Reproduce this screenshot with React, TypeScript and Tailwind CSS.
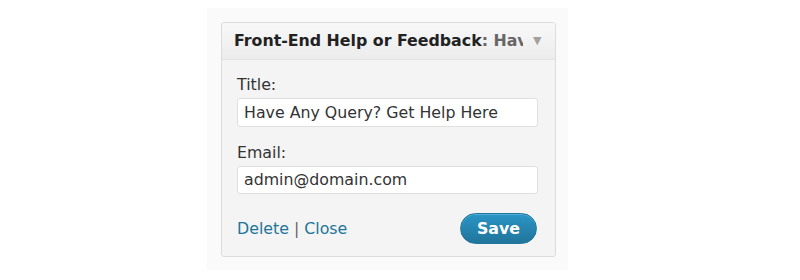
import React from "react";

export default function App() {
  const font = { fontFamily: '"DejaVu Sans", Verdana, sans-serif' };
  return (
    <div className="w-[800px] h-[280px] bg-white flex" style={font}>
      <div className="ml-[207px] mt-[8px] w-[361px] h-[262px] bg-[#fafafa] pt-[14px] pl-[14px]">
        <div className="w-[335px] h-[235px] border border-[#dcdcdc] rounded-[3px] bg-[#f4f4f4] flex flex-col overflow-hidden">
          <div className="h-[37px] flex items-center border-b border-[#e2e2e2] bg-gradient-to-b from-[#f8f8f8] to-[#ececec] pl-[12px] pr-[12px]">
            <div className="overflow-hidden whitespace-nowrap text-[15.8px] font-bold text-[#222] w-[289px]">
              Front-End Help or Feedback<span className="text-[#666]">: Have</span>
            </div>
            <span className="ml-[10px] text-[11px] text-[#a0a0a0]">▼</span>
          </div>
          <div className="flex flex-col pl-[15px] pr-[17px] pt-[15px] text-[15.8px] text-[#333]">
            <div className="leading-[20px]">Title:</div>
            <div className="mt-[3px] h-[29px] bg-white border border-[#dfdfdf] rounded-[3px] flex items-center px-[6px] text-[#333]">
              Have Any Query? Get Help Here
            </div>
            <div className="mt-[16px] leading-[20px]">Email:</div>
            <div className="mt-[3px] h-[28px] bg-white border border-[#dfdfdf] rounded-[3px] flex items-center px-[6px] text-[#333]">
              admin@domain.com
            </div>
            <div className="mt-[19px] flex items-center justify-between">
              <div className="text-[#21759b]">
                Delete <span className="text-[#666]">|</span> Close
              </div>
              <div className="w-[77px] h-[31px] rounded-full bg-gradient-to-b from-[#2a95c5] to-[#21759b] border border-[#21759b] text-white font-bold flex items-center justify-center mr-[1px] shadow-[inset_0_1px_0_rgba(120,200,230,0.5)]">
                Save
              </div>
            </div>
          </div>
        </div>
      </div>
    </div>
  );
}
